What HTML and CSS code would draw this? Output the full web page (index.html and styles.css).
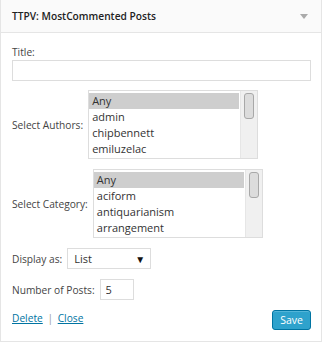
FILE: index.html
```html
<!DOCTYPE html>
<html lang="en">
<head>
  <meta charset="UTF-8" />
  <title>TTPV: MostCommented Posts</title>
  <link rel="stylesheet" href="styles.css">
</head>
<body>
  <div class="widget">
    <div class="widget-top">
      <h4 class="widget-title">TTPV: MostCommented Posts</h4>
      <span class="widget-arrow"></span>
    </div>

    <div class="widget-inside">
      <div class="field">
        <label class="label-block">Title:</label>
        <input class="text-input wide" type="text" />
      </div>

      <!-- author list -->
      <div class="row">
        <span class="label">Select Authors:</span>
        <div class="listbox">
          <ul class="options">
            <li class="selected">Any</li>
            <li>admin</li>
            <li>chipbennett</li>
            <li>emiluzelac</li>
          </ul>
          <div class="scrollbar"><div class="thumb"></div></div>
        </div>
      </div>

      <!-- category list -->
      <div class="row">
        <span class="label">Select Category:</span>
        <div class="listbox">
          <ul class="options">
            <li class="selected">Any</li>
            <li>aciform</li>
            <li>antiquarianism</li>
            <li>arrangement</li>
          </ul>
          <div class="scrollbar"><div class="thumb"></div></div>
        </div>
      </div>

      <div class="row">
        <span class="label">Display as:</span>
        <div class="dropdown">
          <span>List</span>
          <span class="caret">&#9660;</span>
        </div>
      </div>

      <div class="row">
        <span class="label">Number of Posts:</span>
        <input class="text-input small" type="text" value="5" />
      </div>

      <div class="actions">
        <div class="links">
          <a href="#">Delete</a> <span class="sep">|</span> <a href="#">Close</a>
        </div>
        <button class="button-primary">Save</button>
      </div>
    </div>
  </div>
</body>
</html>
```

FILE: styles.css
```css
body {
  margin: 0;
  background: #fff;
  font-family: "Open Sans", sans-serif;
  color: #444;
}
.widget {
  width: 320px;
  height: 341px;
  border: 1px solid #e5e5e5;
  border-top: none;
  background: #fff;
}
.widget-top {
  height: 32px;
  background: #fafafa;
  border-bottom: 1px solid #e5e5e5;
  display: flex;
  align-items: center;
  justify-content: space-between;
  padding: 0 11px;
}
.widget-title {
  margin: 0;
  font-size: 10.2px;
  font-weight: 600;
  color: #222;
}
.widget-arrow {
  width: 0;
  height: 0;
  border-left: 4px solid transparent;
  border-right: 4px solid transparent;
  border-top: 5px solid #aaa;
  margin-right: 2px;
}
.widget-inside {
  padding: 12px 10px 0 11px;
  font-size: 10.2px;
}
.label-block {
  display: block;
  line-height: 14px;
  margin-bottom: 1px;
}
.text-input {
  box-sizing: border-box;
  height: 21px;
  border: 1px solid #ddd;
  font-family: "Open Sans", sans-serif;
  font-size: 11px;
  color: #333;
  padding: 0 5px;
  margin: 0;
  outline: none;
}
.wide {
  width: 100%;
  display: block;
}
.small {
  width: 34px;
}
.row {
  display: flex;
  align-items: center;
  gap: 5px;
  margin-top: 10px;
}
.field + .row {
  margin-top: 9px;
}
.listbox {
  box-sizing: border-box;
  width: 170px;
  height: 69px;
  border: 1px solid #ddd;
  display: flex;
  overflow: hidden;
}
.options {
  list-style: none;
  margin: 0;
  padding: 2px 1px 0 0;
  flex: 1;
  font-size: 11px;
  color: #333;
}
.options li {
  height: 16px;
  line-height: 16px;
  padding-left: 3px;
}
.options .selected {
  background: #cecece;
}
.scrollbar {
  width: 16px;
  background: #f0f0f0;
  border-left: 1px solid #e6e6e6;
  padding-top: 2px;
}
.thumb {
  box-sizing: border-box;
  width: 10px;
  height: 26px;
  margin-left: 3px;
  background: #dcdcdc;
  border: 1px solid #a8a8a8;
  border-radius: 3px;
}
.dropdown {
  box-sizing: border-box;
  width: 84px;
  height: 21px;
  border: 1px solid #ddd;
  display: flex;
  align-items: center;
  justify-content: space-between;
  padding: 0 5px 0 6px;
  font-size: 11px;
  color: #333;
}
.caret {
  font-size: 10px;
  color: #111;
}
.actions {
  display: flex;
  justify-content: space-between;
  align-items: flex-start;
  margin-top: 10px;
}
.links {
  padding-top: 1px;
  line-height: 14px;
}
.links a {
  color: #0074a2;
  text-decoration: underline;
}
.sep {
  color: #999;
  margin: 0 2px;
}
.button-primary {
  box-sizing: border-box;
  width: 39px;
  height: 20px;
  padding: 0;
  background: #2ea2cc;
  border: 1px solid #0074a2;
  border-radius: 3px;
  box-shadow: inset 0 1px 0 rgba(120, 200, 230, 0.5);
  color: #fff;
  font-family: "Open Sans", sans-serif;
  font-size: 10.5px;
  cursor: pointer;
}
```
